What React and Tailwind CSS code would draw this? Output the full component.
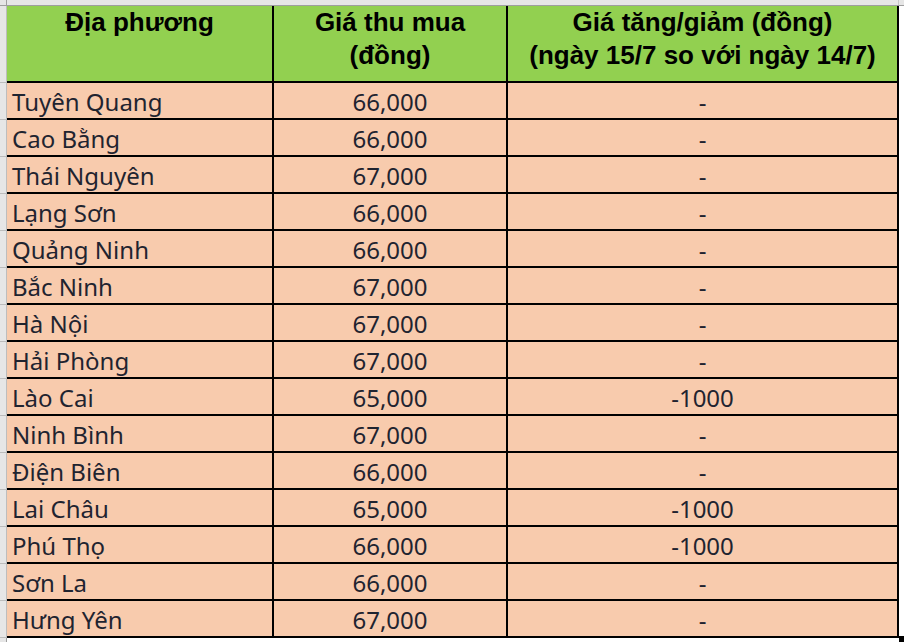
import React from 'react';

const ROWS = [
  ['Tuyên Quang', '66,000', '-'],
  ['Cao Bằng', '66,000', '-'],
  ['Thái Nguyên', '67,000', '-'],
  ['Lạng Sơn', '66,000', '-'],
  ['Quảng Ninh', '66,000', '-'],
  ['Bắc Ninh', '67,000', '-'],
  ['Hà Nội', '67,000', '-'],
  ['Hải Phòng', '67,000', '-'],
  ['Lào Cai', '65,000', '-1000'],
  ['Ninh Bình', '67,000', '-'],
  ['Điện Biên', '66,000', '-'],
  ['Lai Châu', '65,000', '-1000'],
  ['Phú Thọ', '66,000', '-1000'],
  ['Sơn La', '66,000', '-'],
  ['Hưng Yên', '67,000', '-'],
];

const bodyFont = { fontFamily: '"Noto Sans", "Open Sans", sans-serif' };
const headFont = { fontFamily: '"Liberation Sans", Arial, sans-serif' };

export default function App() {
  return (
    <div className="relative w-[904px] h-[642px] bg-white overflow-hidden">
      {/* column header strip */}
      <div className="flex h-[6px] bg-[#e6e6e6] border-b border-[#9e9e9e]">
        <div className="w-[7px] border-r border-[#9e9e9e]" />
        <div className="w-[892px] border-r border-[#c6c6c6]" />
      </div>

      {/* header */}
      <div className="flex h-[77px]">
        <div className="w-[7px] bg-[#e6e6e6] border-r border-[#9e9e9e] border-b border-[#bdbdbd]" />
        <div
          className="w-[267px] bg-[#92d050] border-r-2 border-b-2 border-black text-center text-[26px] font-bold leading-[33px] text-black"
          style={headFont}
        >
          Địa phương
        </div>
        <div
          className="w-[234px] bg-[#92d050] border-r-2 border-b-2 border-black text-center text-[26px] font-bold leading-[33px] text-black"
          style={headFont}
        >
          Giá thu mua
          <br />
          (đồng)
        </div>
        <div
          className="w-[391px] bg-[#92d050] border-r-2 border-b-2 border-black text-center text-[26px] font-bold leading-[33px] text-black whitespace-nowrap"
          style={headFont}
        >
          Giá tăng/giảm (đồng)
          <br />
          (ngày 15/7 so với ngày 14/7)
        </div>
      </div>

      {/* rows */}
      {ROWS.map(([place, price, change]) => (
        <div key={place} className="flex h-[37px]">
          <div className="w-[7px] bg-[#e6e6e6] border-r border-[#9e9e9e] border-b border-[#bdbdbd]" />
          <div
            className="w-[267px] bg-[#f8cbad] border-r-2 border-b-2 border-black flex items-center pl-[5px] pt-[2px] text-[24px] text-[#1f2430]"
            style={bodyFont}
          >
            {place}
          </div>
          <div
            className="w-[234px] bg-[#f8cbad] border-r-2 border-b-2 border-black flex items-center justify-center pt-[2px] text-[24px] text-[#1f2430]"
            style={bodyFont}
          >
            {price}
          </div>
          <div
            className="w-[391px] bg-[#f8cbad] border-r-2 border-b-2 border-black flex items-center justify-center pt-[2px] text-[24px] text-[#1f2430]"
            style={bodyFont}
          >
            {change}
          </div>
        </div>
      ))}

      {/* below table */}
      <div className="flex h-[10px]">
        <div className="w-[7px] bg-[#e6e6e6] border-r border-[#9e9e9e]" />
      </div>

      {/* fill handle */}
      <div className="absolute left-[899px] top-[636px] w-[6px] h-[6px] bg-black" />
    </div>
  );
}
